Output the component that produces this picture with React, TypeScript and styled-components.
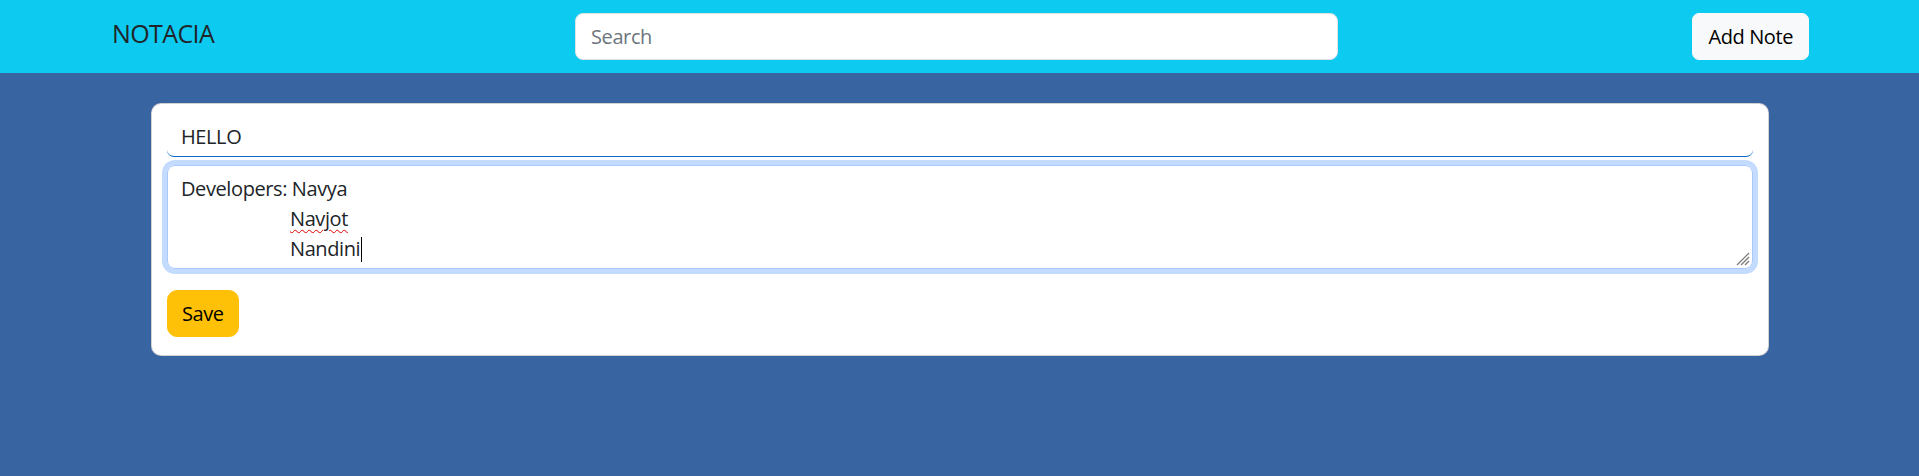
import React from "react";
import styled, { createGlobalStyle } from "styled-components";

const GlobalStyle = createGlobalStyle`
  html, body {
    margin: 0;
    padding: 0;
    min-height: 100%;
    background: #3864a1;
  }
  body {
    font-family: "Open Sans", "Noto Sans", "Liberation Sans", sans-serif;
    color: #212529;
    height: 476px;
  }
  * { box-sizing: border-box; }
`;

const Navbar = styled.nav`
  height: 73px;
  background: #0dcaf0;
  display: grid;
  grid-template-columns: 463px 763px 1fr auto;
  align-items: center;
  padding: 0 110px 0 112px;
`;

const Brand = styled.a`
  font-size: 25px;
  line-height: 37px;
  color: #212529;
  text-decoration: none;
  letter-spacing: -0.6px;
  margin-top: -7px;
`;

const SearchInput = styled.input`
  height: 47px;
  width: 100%;
  border: 1px solid #dee2e6;
  border-radius: 8px;
  background: #fff;
  padding: 0 15px;
  font-family: inherit;
  font-size: 20px;
  color: #212529;
  outline: none;
  &::placeholder {
    color: #6c757d;
    letter-spacing: -0.4px;
  }
`;

const Button = styled.button<{ $variant: "light" | "warning" }>`
  height: 47px;
  padding: 0 ${(p) => (p.$variant === "light" ? "15px" : "14px")};
  border: 1px solid ${(p) => (p.$variant === "light" ? "#f8f9fa" : "#ffc107")};
  background: ${(p) => (p.$variant === "light" ? "#f8f9fa" : "#ffc107")};
  border-radius: ${(p) => (p.$variant === "light" ? "7px" : "10px")};
  font-family: inherit;
  font-size: 20px;
  color: #000;
  letter-spacing: -0.4px;
  cursor: pointer;
`;

const Main = styled.main`
  padding: 30px 150px 0 151px;
`;

const Card = styled.div`
  background: #fff;
  border: 1px solid rgba(0, 0, 0, 0.175);
  border-radius: 10px;
  padding: 15px 15px 18px 15px;
  display: flex;
  flex-direction: column;
  align-items: flex-start;
`;

const TitleInput = styled.input`
  width: 100%;
  height: 38px;
  border: none;
  border-bottom: 1.5px solid #1168c4;
  border-radius: 0 0 7px 7px;
  padding: 0 15px 2px 14px;
  font-family: inherit;
  font-size: 20px;
  color: #212529;
  outline: none;
  letter-spacing: -0.4px;
  background: #fff;
`;

const NoteBody = styled.div`
  position: relative;
  width: 100%;
  height: 104px;
  margin-top: 8px;
  border: 1px solid #a9c9fd;
  border-radius: 8px;
  box-shadow: 0 0 0 5px #c2dbfe;
  padding: 7.5px 15px 7.5px 13px;
  font-size: 20px;
  line-height: 30px;
  letter-spacing: -0.4px;
  color: #212529;
`;

const Line = styled.div<{ $indent?: number }>`
  padding-left: ${(p) => p.$indent ?? 0}px;
  white-space: pre;
`;

const Misspelled = styled.span`
  text-decoration: underline wavy #e00000;
  text-decoration-thickness: 1px;
  text-underline-offset: 3px;
`;

const Caret = styled.span`
  display: inline-block;
  width: 1px;
  height: 25px;
  background: #000;
  vertical-align: -6px;
  margin-left: 1px;
`;

const Grip = styled.svg`
  position: absolute;
  right: 2px;
  bottom: 2px;
`;

const SaveRow = styled.div`
  margin-top: 21px;
`;

export default function App() {
  return (
    <>
      <GlobalStyle />
      <Navbar>
        <Brand href="#">NOTACIA</Brand>
        <SearchInput type="search" placeholder="Search" />
        <span />
        <Button $variant="light">Add Note</Button>
      </Navbar>
      <Main>
        <Card>
          <TitleInput defaultValue="HELLO" />
          <NoteBody role="textbox" aria-multiline="true">
            <Line>Developers: Navya</Line>
            <Line $indent={109}>
              <Misspelled>Navjot</Misspelled>
            </Line>
            <Line $indent={109}>
              Nandini
              <Caret />
            </Line>
            <Grip width="14" height="14" viewBox="0 0 14 14">
              <g stroke="#7a7a7a" strokeWidth="1.2">
                <line x1="13" y1="1" x2="1" y2="13" />
                <line x1="13" y1="5" x2="5" y2="13" />
                <line x1="13" y1="9" x2="9" y2="13" />
              </g>
            </Grip>
          </NoteBody>
          <SaveRow>
            <Button $variant="warning">Save</Button>
          </SaveRow>
        </Card>
      </Main>
    </>
  );
}
